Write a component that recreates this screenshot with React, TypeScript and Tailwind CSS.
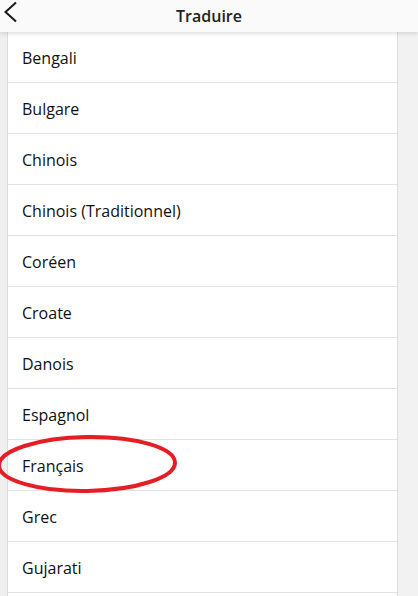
const languages = [
  "Bengali",
  "Bulgare",
  "Chinois",
  "Chinois (Traditionnel)",
  "Coréen",
  "Croate",
  "Danois",
  "Espagnol",
  "Français",
  "Grec",
  "Gujarati",
];

export default function App() {
  return (
    <div className="relative flex h-[596px] w-[418px] flex-col overflow-hidden bg-[#f2f2f2] font-['Open_Sans',sans-serif] text-[#111]">
      <header className="relative z-10 flex h-[32px] shrink-0 items-center justify-center bg-[#fafafa] shadow-[0_2px_4px_rgba(0,0,0,0.12)]">
        <button className="absolute left-0 top-0 flex h-[24px] w-[20px] items-center justify-center">
          <svg width="20" height="24" viewBox="0 0 20 24" fill="none">
            <path d="M16 2.5 L5.5 12 L16 21.5" stroke="#1a1a1a" strokeWidth="2" />
          </svg>
        </button>
        <h1 className="text-[16px] font-semibold text-[#222]">Traduire</h1>
      </header>

      <div className="flex flex-1">
        <div className="w-[7px] shrink-0 bg-[#efefef]" />
        <ul className="w-[391px] shrink-0 border-x border-[#dcdcdc] bg-white">
          {languages.map((name) => (
            <li
              key={name}
              className="flex h-[51px] items-center border-b border-[#e2e2e2] pl-[14px] pt-[2px] text-[16px]"
            >
              {name}
            </li>
          ))}
        </ul>
        <div className="flex-1 bg-[#f2f2f2]" />
      </div>

      <svg
        className="pointer-events-none absolute left-0 top-0"
        width="418"
        height="596"
        viewBox="0 0 418 596"
      >
        <ellipse
          cx="87"
          cy="464"
          rx="88"
          ry="27"
          fill="none"
          stroke="#e51e25"
          strokeWidth="4"
          transform="rotate(-1 87 464)"
        />
      </svg>
    </div>
  );
}
